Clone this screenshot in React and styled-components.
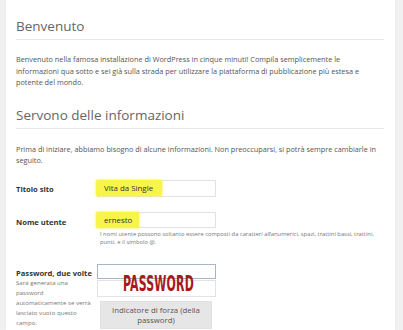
import React from "react";
import styled, { createGlobalStyle } from "styled-components";

const Global = createGlobalStyle`
  html, body { margin: 0; padding: 0; background: #f1f1f1; }
  body { font-family: "Open Sans", "Liberation Sans", sans-serif; color: #444; }
  * { box-sizing: border-box; }
`;

const Page = styled.div`
  width: 403px;
  height: 330px;
  overflow: hidden;
  padding: 0 8px 0 6px;
`;

const Panel = styled.div`
  background: #fff;
  height: 100%;
  padding: 17px 11px 0 10px;
  box-shadow: 0 0 2px rgba(0,0,0,0.06);
`;

const Heading = styled.h1`
  margin: ${p => p.$top || 0}px 0 0;
  padding: 0 0 4px;
  font-size: 13.5px;
  line-height: 18px;
  font-weight: 400;
  color: #666;
  border-bottom: 1px solid #e6e6e6;
`;

const Text = styled.p`
  margin: ${p => p.$top || 0}px 0 0;
  font-size: 7.3px;
  line-height: 11.5px;
  color: #555;
`;

const Form = styled.div`
  display: grid;
  grid-template-columns: 81px 1fr;
  margin-top: 13px;
`;

const Row = styled.div`
  display: contents;
`;

const Label = styled.div`
  font-size: 7.6px;
  font-weight: 700;
  color: #333;
  padding-top: ${p => p.$pt || 5}px;
`;

const Cell = styled.div`
  display: flex;
  flex-direction: column;
  align-items: flex-start;
  position: relative;
`;

const Field = styled.div`
  width: 119px;
  height: ${p => p.$h || 17}px;
  border: 1px solid ${p => (p.$focus ? "#a7b6c6" : "#e2e2e2")};
  background: #fff;
  display: flex;
  align-items: center;
  margin-top: ${p => p.$mt || 0}px;
`;

const Mark = styled.span`
  background: #f7f54a;
  height: 16px;
  display: flex;
  align-items: center;
  padding: 0 ${p => p.$pr || 9}px 0 8px;
  margin-left: -2px;
  border-radius: 2px;
  font-size: 7.9px;
  color: #333;
  box-shadow: 0 0 2px 1px rgba(247, 245, 74, 0.6);
`;

const Hint = styled.div`
  font-size: 5.8px;
  line-height: 8.5px;
  color: #777;
  margin-top: 2px;
  padding-left: 3px;
  width: 285px;
`;

const SideHint = styled.div`
  font-size: 6.1px;
  line-height: 10.2px;
  color: #777;
  font-weight: 400;
  margin-top: 0;
  white-space: nowrap;
`;

const Strength = styled.div`
  width: 112px;
  height: 28px;
  margin: 4px 0 0 3px;
  background: #e6e6e6;
  border: 1px solid #e0e0e0;
  display: flex;
  align-items: center;
  justify-content: center;
  text-align: center;
  font-size: 7.8px;
  line-height: 10px;
  color: #555;
  padding: 0 8px;
`;

const Stamp = styled.div`
  position: absolute;
  left: 26px;
  top: 26px;
  font-family: "DejaVu Sans Condensed", "Liberation Sans", sans-serif;
  font-weight: 700;
  font-size: 19px;
  line-height: 19px;
  color: #a8181c;
  transform: scaleX(0.64) scaleY(1.1);
  transform-origin: left top;
  letter-spacing: 0.3px;
`;

export default function App() {
  return (
    <>
      <Global />
      <Page>
        <Panel>
          <Heading>Benvenuto</Heading>
          <Text $top={14}>
            Benvenuto nella famosa installazione di WordPress in cinque minuti! Compila semplicemente le
            informazioni qua sotto e sei già sulla strada per utilizzare la piattaforma di pubblicazione più estesa e
            potente del mondo.
          </Text>
          <Heading $top={17}>Servono delle informazioni</Heading>
          <Text $top={15}>
            Prima di iniziare, abbiamo bisogno di alcune informazioni. Non preoccuparsi, si potrà sempre cambiarle in
            seguito.
          </Text>
          <Form>
            <Row>
              <Label $pt={4}>Titolo sito</Label>
              <Cell>
                <Field>
                  <Mark $pr={9}>Vita da Single</Mark>
                </Field>
              </Cell>
            </Row>
            <Row>
              <Label $pt={20}>Nome utente</Label>
              <Cell>
                <Field $h={16} $mt={15}>
                  <Mark $pr={7}>ernesto</Mark>
                </Field>
                <Hint>
                  I nomi utente possono soltanto essere composti da caratteri alfanumerici, spazi, trattini bassi, trattini,
                  punti, e il simbolo @.
                </Hint>
              </Cell>
            </Row>
            <Row>
              <Label $pt={21}>
                Password, due volte
                <SideHint>
                  Sarà generata una<br />
                  password<br />
                  automaticamente se verrà<br />
                  lasciato vuoto questo<br />
                  campo.
                </SideHint>
              </Label>
              <Cell>
                <Field $h={15} $mt={17} $focus />
                <Field $h={17} $mt={1} />
                <Strength>Indicatore di forza (della password)</Strength>
                <Stamp>PASSWORD</Stamp>
              </Cell>
            </Row>
          </Form>
        </Panel>
      </Page>
    </>
  );
}
